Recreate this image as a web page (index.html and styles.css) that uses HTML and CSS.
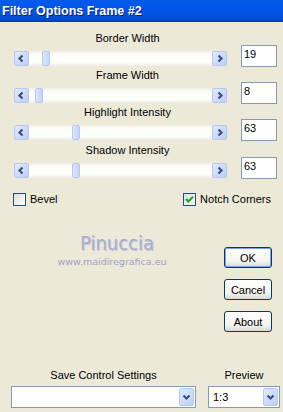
FILE: index.html
```html
<!DOCTYPE html>
<html lang="en">
<head>
    <meta charset="UTF-8">
    <title>Filter Options Frame #2</title>
    <meta name="viewport" content="width=device-width, initial-scale=1">
    <link rel="stylesheet" href="styles.css">
</head>
<body>
    <div class="titlebar">Filter Options Frame #2</div>

    <div class="params">
        <div class="param">
            <div class="param-label">Border Width</div>
            <div class="param-row">
                <div class="slider">
                    <span class="arrow"><svg width="15" height="15" viewBox="0 0 15 15"><path d="M8.5 4.5 L5.5 7.5 L8.5 10.5" /></svg></span>
                    <span class="trough"><span class="thumb" style="margin-left:13px"></span></span>
                    <span class="arrow"><svg width="15" height="15" viewBox="0 0 15 15"><path d="M6.5 4.5 L9.5 7.5 L6.5 10.5" /></svg></span>
                </div>
                <div class="numbox">19</div>
            </div>
        </div>
        <div class="param">
            <div class="param-label">Frame Width</div>
            <div class="param-row">
                <div class="slider">
                    <span class="arrow"><svg width="15" height="15" viewBox="0 0 15 15"><path d="M8.5 4.5 L5.5 7.5 L8.5 10.5" /></svg></span>
                    <span class="trough"><span class="thumb" style="margin-left:6px"></span></span>
                    <span class="arrow"><svg width="15" height="15" viewBox="0 0 15 15"><path d="M6.5 4.5 L9.5 7.5 L6.5 10.5" /></svg></span>
                </div>
                <div class="numbox">8</div>
            </div>
        </div>
        <div class="param">
            <div class="param-label">Highlight Intensity</div>
            <div class="param-row">
                <div class="slider">
                    <span class="arrow"><svg width="15" height="15" viewBox="0 0 15 15"><path d="M8.5 4.5 L5.5 7.5 L8.5 10.5" /></svg></span>
                    <span class="trough"><span class="thumb" style="margin-left:43px"></span></span>
                    <span class="arrow"><svg width="15" height="15" viewBox="0 0 15 15"><path d="M6.5 4.5 L9.5 7.5 L6.5 10.5" /></svg></span>
                </div>
                <div class="numbox">63</div>
            </div>
        </div>
        <div class="param">
            <div class="param-label">Shadow Intensity</div>
            <div class="param-row">
                <div class="slider">
                    <span class="arrow"><svg width="15" height="15" viewBox="0 0 15 15"><path d="M8.5 4.5 L5.5 7.5 L8.5 10.5" /></svg></span>
                    <span class="trough"><span class="thumb" style="margin-left:43px"></span></span>
                    <span class="arrow"><svg width="15" height="15" viewBox="0 0 15 15"><path d="M6.5 4.5 L9.5 7.5 L6.5 10.5" /></svg></span>
                </div>
                <div class="numbox">63</div>
            </div>
        </div>
    </div>

    <div class="checks">
        <label class="check"><span class="box"></span>Bevel</label>
        <label class="check"><span class="box"><svg width="11" height="11" viewBox="0 0 11 11"><path d="M2 5 L4.3 7.5 L9 2.8" /></svg></span>Notch Corners</label>
    </div>

    <div class="middle">
        <div class="watermark">
            <div class="brand">Pinuccia</div>
            <div class="site">www.maidiregrafica.eu</div>
        </div>
        <div class="buttons">
            <button class="btn default">OK</button>
            <button class="btn">Cancel</button>
            <button class="btn">About</button>
        </div>
    </div>

    <div class="bottom">
        <div class="field save">
            <div class="field-label">Save Control Settings</div>
            <div class="combo">
                <span class="value"></span>
                <span class="drop"><svg width="15" height="18" viewBox="0 0 15 18"><path d="M4.5 7.5 L7.5 10.5 L10.5 7.5" /></svg></span>
            </div>
        </div>
        <div class="field preview">
            <div class="field-label">Preview</div>
            <div class="combo">
                <span class="value">1:3</span>
                <span class="drop"><svg width="15" height="18" viewBox="0 0 15 18"><path d="M4.5 7.5 L7.5 10.5 L10.5 7.5" /></svg></span>
            </div>
        </div>
    </div>
</body>
</html>
```

FILE: styles.css
```css
* { box-sizing: border-box; }
body { margin: 0; background: #ece9d8; color: #000; font-family: "Liberation Sans", Arial, sans-serif; font-size: 11px; }

.titlebar { height: 22px; padding-left: 2px; line-height: 23px; color: #fff; font-weight: bold; font-size: 12.5px; text-shadow: 1px 1px #0f1a8a;
    background: linear-gradient(#0a5be6 0%, #0058ee 12%, #0053e1 60%, #0049d6 85%, #003cc0 100%); }

.params { padding: 10px 6px 0 13px; }
.param + .param { margin-top: 2px; }
.param:last-child { margin-top: 3px; }
.param-label { width: 215px; height: 13px; line-height: 13px; padding-left: 14px; text-align: center; }
.param-row { display: flex; gap: 13px; }

.slider { display: flex; width: 215px; height: 15px; margin-top: 6px; }
.arrow { width: 15px; height: 15px; border: 1px solid #b5c8f3; border-radius: 2px; background: linear-gradient(135deg, #e0e9fe, #bccff9); display: flex; }
.arrow:first-child { margin-left: 1px; }
.arrow:last-child { margin-right: 1px; }
.arrow svg { margin: -1px; }
.arrow path, .drop path { fill: none; stroke: #3d5080; stroke-width: 2.2; }
.trough { flex: 1; display: flex; background: linear-gradient(#f0eee6, #fdfdfa 25%, #fefefb 75%, #eeede5); }
.thumb { width: 8px; height: 15px; border: 1px solid #b5c8f3; border-radius: 2px; background: linear-gradient(90deg, #dde7fd, #c3d4fa); }

.numbox { width: 36px; height: 22px; border: 1px solid #7f9db9; background: #fff; padding: 1px 0 0 2px; line-height: 14px; }

.checks { display: flex; justify-content: space-between; margin-top: 14px; padding: 0 12px 0 13px; }
.check { display: flex; align-items: center; gap: 4px; line-height: 13px; }
.box { width: 13px; height: 13px; border: 1px solid #1c5180; background: linear-gradient(135deg, #dcdcd7, #fff); display: flex; }
.box path { fill: none; stroke: #21a121; stroke-width: 2; }

.middle { display: flex; padding-right: 11px; }
.watermark { flex: 1; margin-top: 26px; text-align: center; color: #a9aecd; }
.brand { font-family: "DejaVu Sans Condensed", "DejaVu Sans", sans-serif; font-stretch: condensed; font-size: 20px; line-height: 22px; padding-left: 10px; text-shadow: 1px 1px #c4c6d8; }
.site { font-family: "DejaVu Sans", sans-serif; font-size: 9.5px; line-height: 11px; margin-top: 2px; color: #9ea3c2; }

.buttons { display: flex; flex-direction: column; gap: 11px; margin-top: 41px; width: 48px; }
.btn { width: 48px; height: 21px; padding: 0; border: 1px solid #003c74; border-radius: 3px; font-family: inherit; font-size: 11px; color: #000;
    background: linear-gradient(#fff, #f4f3ee 70%, #dcd7cb); }
.btn.default { box-shadow: inset 0 0 0 1px #7fa2e6; }

.bottom { display: flex; gap: 12px; margin-top: 37px; padding-left: 11px; }
.save { width: 185px; }
.preview { width: 72px; }
.field-label { height: 13px; line-height: 13px; text-align: center; }
.combo { display: flex; align-items: center; height: 22px; margin-top: 4px; padding: 1px; border: 1px solid #7f9db9; background: #fff; }
.value { flex: 1; padding-left: 3px; }
.drop { width: 15px; height: 18px; border: 1px solid #b5c8f3; border-radius: 2px; background: linear-gradient(135deg, #e0e9fe, #bccff9); display: flex; }
.drop svg { margin: -1px; }
```
